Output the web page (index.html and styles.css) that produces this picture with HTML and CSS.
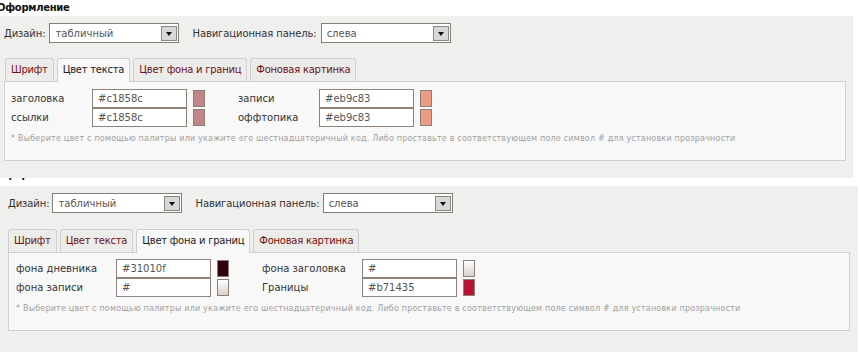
FILE: index.html
```html
<!DOCTYPE html>
<html>
<head>
  <meta charset="utf-8">
  <title>Оформление</title>
  <link rel="stylesheet" href="styles.css">
</head>
<body>
  <div class="page-title">Оформление</div>
  <div class="frame frame-top">
    <div class="toolbar">
      <span class="field-label">Дизайн:</span>
      <span class="select"><span class="select-value">табличный</span><span class="select-btn"></span></span>
      <span class="field-label nav-label">Навигационная панель:</span>
      <span class="select"><span class="select-value">слева</span><span class="select-btn"></span></span>
    </div>
    <div class="tabs">
      <div class="tab">Шрифт</div>
      <div class="tab active">Цвет текста</div>
      <div class="tab">Цвет фона и границ</div>
      <div class="tab">Фоновая картинка</div>
    </div>
    <div class="panel">
      <div class="color-row">
        <div class="pair"><span class="color-label">заголовка</span><span class="color-input">#c1858c</span><span class="swatch" style="background:#c1858c"></span></div>
        <div class="pair"><span class="color-label">записи</span><span class="color-input">#eb9c83</span><span class="swatch" style="background:#eb9c83"></span></div>
      </div>
      <div class="color-row">
        <div class="pair"><span class="color-label">ссылки</span><span class="color-input">#c1858c</span><span class="swatch" style="background:#c1858c"></span></div>
        <div class="pair"><span class="color-label">оффтопика</span><span class="color-input">#eb9c83</span><span class="swatch" style="background:#eb9c83"></span></div>
      </div>
      <p class="note">* Выберите цвет с помощью палитры или укажите его шестнадцатеричный код. Либо проставьте в соответствующем поле символ # для установки прозрачности</p>
    </div>
  </div>

  <div class="cut"><div class="page-title">Оформление</div></div>

  <div class="frame frame-bottom">
    <div class="toolbar">
      <span class="field-label">Дизайн:</span>
      <span class="select"><span class="select-value">табличный</span><span class="select-btn"></span></span>
      <span class="field-label nav-label">Навигационная панель:</span>
      <span class="select"><span class="select-value">слева</span><span class="select-btn"></span></span>
    </div>
    <div class="tabs">
      <div class="tab">Шрифт</div>
      <div class="tab">Цвет текста</div>
      <div class="tab active">Цвет фона и границ</div>
      <div class="tab">Фоновая картинка</div>
    </div>
    <div class="panel">
      <div class="color-row">
        <div class="pair"><span class="color-label">фона дневника</span><span class="color-input">#31010f</span><span class="swatch" style="background:#31010f"></span></div>
        <div class="pair"><span class="color-label">фона заголовка</span><span class="color-input">#</span><span class="swatch empty"></span></div>
      </div>
      <div class="color-row">
        <div class="pair"><span class="color-label">фона записи</span><span class="color-input">#</span><span class="swatch empty"></span></div>
        <div class="pair"><span class="color-label">Границы</span><span class="color-input">#b71435</span><span class="swatch" style="background:#b71435"></span></div>
      </div>
      <p class="note">* Выберите цвет с помощью палитры или укажите его шестнадцатеричный код. Либо проставьте в соответствующем поле символ # для установки прозрачности</p>
    </div>
  </div>
</body>
</html>
```

FILE: styles.css
```css
html, body {
  margin: 0;
  background-color: #fff;
  font-family: "DejaVu Sans", Verdana, sans-serif;
  font-size: 10px;
  color: #333;
}

.page-title {
  height: 16px;
  line-height: 16px;
  margin-left: -3px;
  font-weight: 700;
  font-size: 10px;
  letter-spacing: -0.3px;
  color: #111;
}

.cut {
  height: 8px;
  overflow: hidden;
}

.cut .page-title {
  margin-top: -11px;
}

.frame {
  background-color: #efefed;
  box-sizing: border-box;
}

.frame-top {
  width: 853px;
  height: 162px;
  padding: 7px 7px 0 4px;
}

.frame-bottom {
  width: 858px;
  height: 166px;
  padding: 7px 8px 0 8px;
}

.toolbar {
  display: flex;
  align-items: center;
  height: 20px;
}

.field-label {
  margin-right: 4px;
  letter-spacing: -0.1px;
}

.frame-bottom .field-label {
  margin-right: 3px;
}

.nav-label {
  margin-left: 13px;
}

.select {
  display: flex;
  align-items: center;
  justify-content: space-between;
  width: 130px;
  height: 20px;
  box-sizing: border-box;
  border: 1px solid #857d76;
  background-color: #fff;
  padding: 0 1px 0 5px;
  color: #555;
}

.select-btn {
  width: 16px;
  height: 15px;
  box-sizing: border-box;
  border: 1px solid #8a8580;
  background-color: #d8d8d6;
  position: relative;
}

.select-btn::after {
  content: "";
  position: absolute;
  left: 4px;
  top: 5px;
  border-left: 3px solid transparent;
  border-right: 3px solid transparent;
  border-top: 4px solid #111;
}

.tabs {
  display: flex;
  gap: 3px;
  margin-top: 15px;
  padding-left: 1px;
  height: 23px;
}

.frame-bottom .tabs {
  margin-top: 16px;
  padding-left: 0;
}

.tab {
  box-sizing: border-box;
  height: 23px;
  line-height: 22px;
  padding: 0 5px;
  border: 1px solid #cfcfcf;
  border-bottom: none;
  border-radius: 3px 3px 0 0;
  background-color: #ececea;
  color: #6e1212;
  letter-spacing: -0.25px;
  white-space: nowrap;
}

.tab.active {
  background-color: #f8f8f8;
  color: #222;
  height: 24px;
  margin-bottom: -1px;
  position: relative;
}

.panel {
  box-sizing: border-box;
  width: 842px;
  height: 80px;
  border: 1px solid #cfcfcf;
  background-color: #f8f8f8;
  padding: 7px 6px 0 6px;
}

.frame-bottom .panel {
  height: 79px;
  padding: 6px 7px 0 7px;
}

.color-row {
  display: flex;
  height: 19px;
}

.pair {
  display: flex;
  align-items: center;
  margin-right: 33px;
}

.color-label {
  width: 81px;
}

.frame-bottom .color-label {
  width: 100px;
}

.color-input {
  box-sizing: border-box;
  width: 95px;
  height: 19px;
  line-height: 17px;
  padding-left: 5px;
  border: 1px solid #8d8378;
  background-color: #fff;
  color: #555;
}

.swatch {
  box-sizing: border-box;
  width: 12px;
  height: 17px;
  margin-left: 6px;
  border: 1px solid #8d7f74;
}

.swatch.empty {
  background: linear-gradient(to bottom, #fff, #d6d2ce);
}

.note {
  margin: 6px 0 0 0;
  font-size: 8px;
  line-height: 12px;
  letter-spacing: 0.2px;
  color: #a0a0a0;
  white-space: nowrap;
}
```
